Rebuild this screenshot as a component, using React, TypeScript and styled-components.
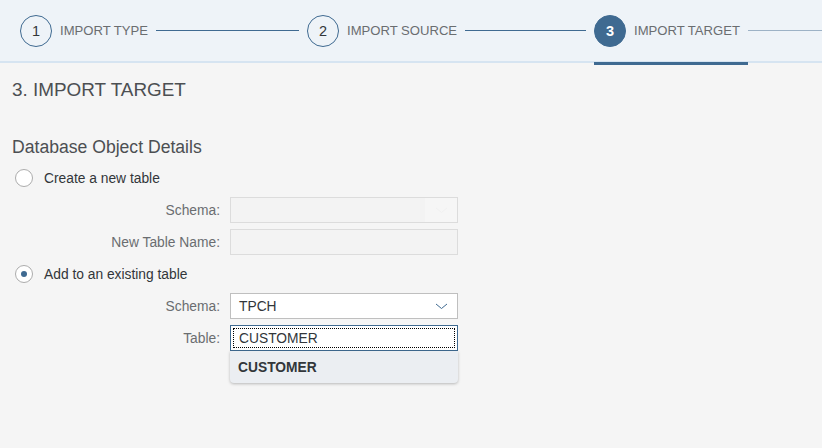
import React from "react";
import styled, { createGlobalStyle } from "styled-components";

const Global = createGlobalStyle`
  html, body { margin: 0; padding: 0; background: #f5f5f5; overflow: hidden; }
  body { font-family: "Liberation Sans", Arial, sans-serif; color: #32363a; }
  * { box-sizing: border-box; }
`;

const Page = styled.div`
  width: 822px;
  height: 448px;
  background: #f5f5f5;
`;

const StepsBar = styled.div`
  display: flex;
  align-items: stretch;
  height: 63px;
  padding-left: 20px;
  background: #eef3f8;
  border-bottom: 2px solid #d6e4f1;
`;

const Step = styled.div<{ $last?: boolean }>`
  display: flex;
  align-items: center;
  flex: ${(p) => (p.$last ? "1 1 auto" : "0 0 287px")};
  min-width: 0;
`;

const StepHead = styled.div<{ $active?: boolean }>`
  position: relative;
  display: flex;
  align-items: center;
  gap: 8px;
  height: 100%;
  padding-right: 8px;
  &::after {
    content: "";
    display: ${(p) => (p.$active ? "block" : "none")};
    position: absolute;
    left: 0;
    right: 0;
    top: 62px;
    height: 3px;
    background: #3f6a91;
  }
`;

const Circle = styled.div<{ $active?: boolean }>`
  width: 32px;
  height: 32px;
  border-radius: 50%;
  border: 1px solid #3f6a91;
  background: ${(p) => (p.$active ? "#3f6a91" : "transparent")};
  color: ${(p) => (p.$active ? "#ffffff" : "#32363a")};
  font-weight: ${(p) => (p.$active ? "bold" : "normal")};
  font-size: 14.5px;
  display: flex;
  align-items: center;
  justify-content: center;
  flex: 0 0 auto;
`;

const StepLabel = styled.span`
  font-size: 13.1px;
  color: #6a6d70;
  white-space: nowrap;
`;

const Connector = styled.div<{ $pending?: boolean }>`
  flex: 1 1 auto;
  height: 1px;
  background: ${(p) => (p.$pending ? "#9db2c6" : "#3f6a91")};
  margin-right: ${(p) => (p.$pending ? "0" : "8px")};
`;

const Content = styled.div`
  padding: 0 12px;
`;

const Title = styled.h2`
  margin: 15px 0 0;
  font-size: 18.9px;
  line-height: 24px;
  font-weight: normal;
  color: #4c4f52;
`;

const SectionTitle = styled.h3`
  margin: 34px 0 0;
  font-size: 17.6px;
  line-height: 22px;
  font-weight: normal;
  color: #4c4f52;
`;

const RadioRow = styled.div<{ $first?: boolean }>`
  display: flex;
  align-items: center;
  gap: 11px;
  height: 32px;
  margin-top: ${(p) => (p.$first ? "4px" : "0")};
  padding-left: 3px;
  font-size: 13.8px;
  color: #32363a;
`;

const Radio = styled.span<{ $checked?: boolean }>`
  width: 18px;
  height: 18px;
  border-radius: 50%;
  border: 1.5px solid #acacac;
  background: #ffffff;
  display: flex;
  align-items: center;
  justify-content: center;
  &::after {
    content: "";
    display: ${(p) => (p.$checked ? "block" : "none")};
    width: 6px;
    height: 6px;
    border-radius: 50%;
    background: #3f6a91;
  }
`;

const FormRow = styled.div`
  display: grid;
  grid-template-columns: 208px 228px;
  column-gap: 10px;
  align-items: center;
  height: 32px;
`;

const Label = styled.label`
  text-align: right;
  font-size: 13.8px;
  color: #6a6d70;
`;

const FieldWrap = styled.div`
  position: relative;
`;

const Field = styled.div<{ $disabled?: boolean; $focused?: boolean }>`
  position: relative;
  display: flex;
  align-items: center;
  height: 26px;
  padding: 0 8px;
  font-size: 13.8px;
  color: #32363a;
  background: ${(p) => (p.$disabled ? "#f3f3f3" : "#ffffff")};
  border: 1px solid
    ${(p) => (p.$disabled ? "#dcdcdc" : p.$focused ? "#3f6a91" : "#bfbfbf")};
  outline: ${(p) => (p.$focused ? "1px dotted #000000" : "none")};
  outline-offset: -4px;
`;

const FieldText = styled.span`
  flex: 1 1 auto;
`;

const ArrowBox = styled.span<{ $disabled?: boolean }>`
  display: flex;
  align-items: center;
  justify-content: center;
  width: 32px;
  height: 100%;
  margin-right: -8px;
  background: ${(p) => (p.$disabled ? "#f6f6f6" : "transparent")};
  color: ${(p) => (p.$disabled ? "#f1f1f1" : "#3f6a91")};
`;

const Suggest = styled.div`
  position: absolute;
  left: 0;
  right: 0;
  top: 26px;
  height: 32px;
  display: flex;
  align-items: center;
  padding: 0 8px;
  background: #ebeef2;
  border-radius: 0 0 4px 4px;
  box-shadow: 0 1px 3px rgba(0, 0, 0, 0.25);
  font-size: 13.8px;
  font-weight: bold;
  color: #32363a;
  z-index: 2;
`;

const Chevron = () => (
  <svg width="13" height="7" viewBox="0 0 13 7" fill="none">
    <path d="M1 1 L6.5 5.5 L12 1" stroke="currentColor" strokeWidth="1" />
  </svg>
);

const steps = [
  { n: 1, label: "IMPORT TYPE" },
  { n: 2, label: "IMPORT SOURCE" },
  { n: 3, label: "IMPORT TARGET", active: true },
];

export default function App() {
  return (
    <Page>
      <Global />
      <StepsBar>
        {steps.map((s, i) => (
          <Step key={s.n} $last={i === steps.length - 1}>
            <StepHead $active={s.active}>
              <Circle $active={s.active}>{s.n}</Circle>
              <StepLabel>{s.label}</StepLabel>
            </StepHead>
            <Connector $pending={s.active} />
          </Step>
        ))}
      </StepsBar>
      <Content>
        <Title>3. IMPORT TARGET</Title>
        <SectionTitle>Database Object Details</SectionTitle>
        <RadioRow $first>
          <Radio />
          <span>Create a new table</span>
        </RadioRow>
        <FormRow>
          <Label>Schema:</Label>
          <Field $disabled>
            <FieldText />
            <ArrowBox $disabled>
              <Chevron />
            </ArrowBox>
          </Field>
        </FormRow>
        <FormRow>
          <Label>New Table Name:</Label>
          <Field $disabled />
        </FormRow>
        <RadioRow>
          <Radio $checked />
          <span>Add to an existing table</span>
        </RadioRow>
        <FormRow>
          <Label>Schema:</Label>
          <Field>
            <FieldText>TPCH</FieldText>
            <ArrowBox>
              <Chevron />
            </ArrowBox>
          </Field>
        </FormRow>
        <FormRow>
          <Label>Table:</Label>
          <FieldWrap>
            <Field $focused>
              <FieldText>CUSTOMER</FieldText>
            </Field>
            <Suggest>CUSTOMER</Suggest>
          </FieldWrap>
        </FormRow>
      </Content>
    </Page>
  );
}
